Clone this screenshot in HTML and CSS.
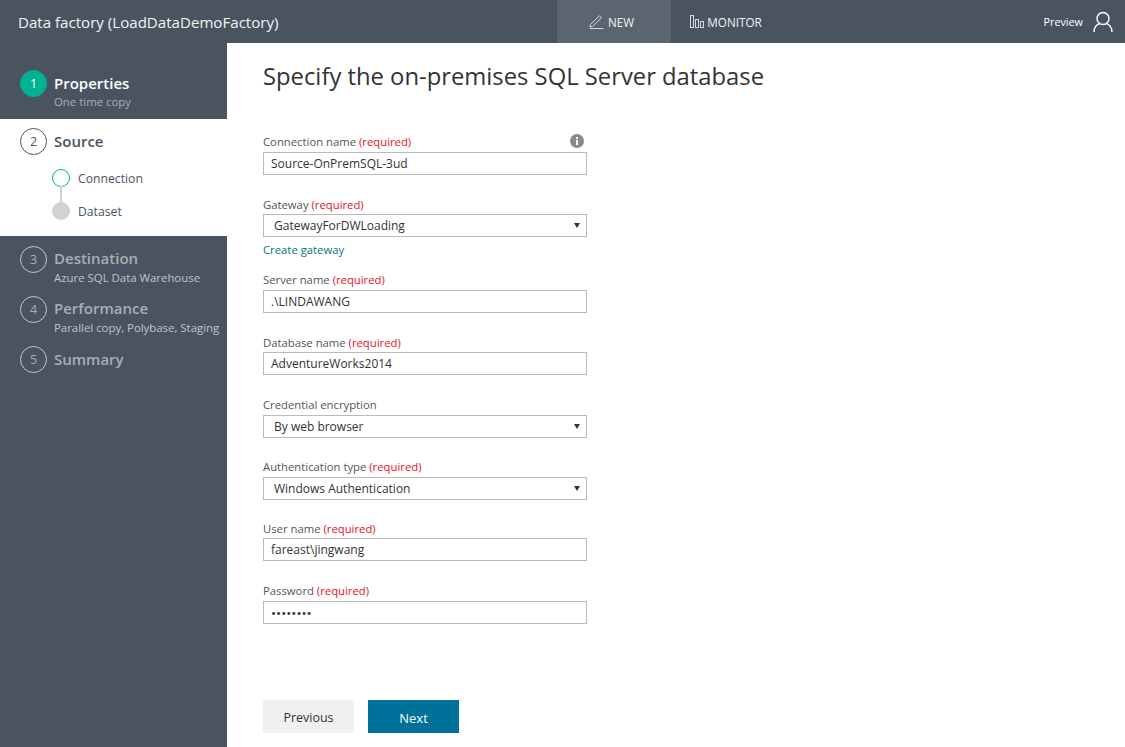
FILE: index.html
```html
<!DOCTYPE html>
<html lang="en">

<head>
    <title>Data factory</title>
    <meta name="viewport" content="initial-scale=1, width=device-width">
    <link rel="stylesheet" href="styles.css">
</head>

<body>
    <header class="topbar">
        <div class="brand">Data factory (LoadDataDemoFactory)</div>
        <nav class="tabs">
            <a class="tab active">
                <svg width="16" height="14" viewBox="0 0 16 14" fill="none" stroke="#d5d9dd" stroke-width="1">
                    <path d="M1.5 9.5 L10.5 0.8 L12.5 2.8 L3.5 11.5 L1 12 Z" />
                    <path d="M1 13.5 H14.5" />
                </svg>
                NEW
            </a>
            <a class="tab monitor">
                <svg width="14" height="13" viewBox="0 0 14 13" fill="none" stroke="#d5d9dd" stroke-width="1">
                    <rect x="0.5" y="0.5" width="3" height="12" />
                    <rect x="5.5" y="4.5" width="3" height="8" />
                    <rect x="10.5" y="6.5" width="3" height="6" />
                </svg>
                MONITOR
            </a>
        </nav>
        <div class="account">
            <span>Preview</span>
            <svg width="20" height="22" viewBox="0 0 20 22" fill="none" stroke="#fff" stroke-width="1.4">
                <circle cx="10" cy="7.5" r="6" />
                <path d="M1 21 C1 16 4 13 7 12.6 M19 21 C19 16 16 13 13 12.6" />
            </svg>
        </div>
    </header>

    <div class="wrap">
        <aside class="sidebar">
            <div class="step done">
                <div class="num">1</div>
                <div>
                    <div class="step-title">Properties</div>
                    <div class="step-sub">One time copy</div>
                </div>
            </div>
            <div class="current">
                <div class="step">
                    <div class="num">2</div>
                    <div class="step-title">Source</div>
                </div>
                <div class="substep">
                    <span class="dot ring"></span>
                    Connection
                </div>
                <div class="substep">
                    <span class="dot fill"></span>
                    Dataset
                </div>
            </div>
            <div class="step later">
                <div class="num">3</div>
                <div>
                    <div class="step-title">Destination</div>
                    <div class="step-sub">Azure SQL Data Warehouse</div>
                </div>
            </div>
            <div class="step later">
                <div class="num">4</div>
                <div>
                    <div class="step-title">Performance</div>
                    <div class="step-sub">Parallel copy, Polybase, Staging</div>
                </div>
            </div>
            <div class="step later">
                <div class="num">5</div>
                <div class="step-title">Summary</div>
            </div>
        </aside>

        <main class="content">
            <h1>Specify the on-premises SQL Server database</h1>

            <form class="form">
                <div class="field">
                    <label for="conn">Connection name <em>(required)</em></label>
                    <svg class="info" width="14" height="14" viewBox="0 0 14 14">
                        <circle cx="7" cy="7" r="7" fill="#8a8a8a" />
                        <rect x="6" y="6" width="2" height="5" fill="#fff" />
                        <rect x="6" y="3" width="2" height="2" fill="#fff" />
                    </svg>
                    <input type="text" id="conn" value="Source-OnPremSQL-3ud">
                </div>
                <div class="field">
                    <label class="low" for="gateway">Gateway <em>(required)</em></label>
                    <div class="select">
                        <select id="gateway">
                            <option>GatewayForDWLoading</option>
                        </select>
                    </div>
                    <a class="link">Create gateway</a>
                </div>
                <div class="field">
                    <label for="server">Server name <em>(required)</em></label>
                    <input type="text" id="server" value=".\LINDAWANG">
                </div>
                <div class="field wide-gap">
                    <label class="low" for="db">Database name <em>(required)</em></label>
                    <input type="text" id="db" value="AdventureWorks2014">
                </div>
                <div class="field">
                    <label for="cred">Credential encryption</label>
                    <div class="select">
                        <select id="cred">
                            <option>By web browser</option>
                        </select>
                    </div>
                </div>
                <div class="field narrow-gap">
                    <label for="auth">Authentication type <em>(required)</em></label>
                    <div class="select">
                        <select id="auth">
                            <option>Windows Authentication</option>
                        </select>
                    </div>
                </div>
                <div class="field wide-gap">
                    <label class="low" for="user">User name <em>(required)</em></label>
                    <input class="clipped" type="text" id="user" value="fareast\jingwang">
                </div>
                <div class="field">
                    <label for="pass">Password <em>(required)</em></label>
                    <input class="dots" type="password" id="pass" value="password">
                </div>
            </form>

            <div class="buttons">
                <button class="btn">Previous</button>
                <button class="btn primary">Next</button>
            </div>
        </main>
    </div>
</body>
</html>
```

FILE: styles.css
```css
* {
    box-sizing: border-box;
    font-family: "Open Sans", "Noto Sans", sans-serif;
}

html,
body {
    margin: 0;
    padding: 0;
    height: 100%;
    background-color: #fff;
    overflow: hidden;
}

.topbar {
    display: flex;
    align-items: center;
    height: 43px;
    background-color: #4a5460;
    color: #fff;
}

.brand {
    width: 557px;
    padding-left: 18px;
    font-size: 15.1px;
    color: #f2f2f2;
}

.tabs {
    display: flex;
    height: 100%;
}

.tab {
    display: flex;
    align-items: center;
    justify-content: center;
    gap: 3px;
    width: 114px;
    font-size: 11.7px;
    color: #f2f2f2;
}

.tab.active {
    background-color: #5b6570;
    padding-right: 5px;
}

.tab.monitor {
    padding-right: 4px;
}

.account {
    display: flex;
    align-items: center;
    gap: 10px;
    margin-left: auto;
    padding-right: 12px;
    font-size: 10.8px;
}

.wrap {
    display: flex;
    height: 704px;
}

.sidebar {
    width: 227px;
    flex-shrink: 0;
    background-color: #4a5460;
}

.step {
    display: flex;
    align-items: flex-start;
    gap: 7px;
    padding-left: 20px;
    height: 50px;
    color: #a9aeb4;
}

.step .num {
    width: 27px;
    height: 27px;
    flex-shrink: 0;
    border: 1px solid #c4c7cb;
    border-radius: 50%;
    text-align: center;
    font-size: 12.5px;
    line-height: 25px;
}

.step-title {
    font-size: 15px;
    font-weight: 600;
    line-height: 24px;
}

.step-sub {
    font-size: 11.4px;
    line-height: 15px;
    color: #c0c3c7;
}

.step.done {
    height: 76px;
    padding-top: 27px;
}

.step.done .num {
    background-color: #00b294;
    border-color: #00b294;
    color: #fff;
}

.step.done .step-title {
    color: #fff;
    line-height: 26px;
}

.step.done .step-sub {
    margin-top: -2px;
    color: #a9aeb4;
}

.current {
    height: 117px;
    margin-bottom: 10px;
    padding-top: 9px;
    background-color: #fff;
}

.current .step {
    height: 41px;
    color: #4a5460;
}

.current .step-title {
    line-height: 26px;
}

.current .num {
    border-color: #4a5460;
}

.later:last-child .step-title {
    line-height: 26px;
}

.substep {
    display: flex;
    align-items: center;
    gap: 8px;
    position: relative;
    height: 18px;
    margin: 0 0 15px 52px;
    font-size: 12.2px;
    color: #4a5460;
}

.dot {
    width: 18px;
    height: 18px;
    border-radius: 50%;
}

.dot.ring {
    border: 1px solid #00b294;
}

.dot.fill {
    background-color: #d2d2d2;
}

/* line between the two sub steps */
.dot.fill::before {
    content: "";
    position: absolute;
    left: 8px;
    top: -16px;
    width: 2px;
    height: 16px;
    background-color: #d2d2d2;
}

.content {
    flex: 1;
    padding: 18px 0 0 36px;
}

h1 {
    margin: 0;
    height: 74px;
    font-size: 23.8px;
    font-weight: 400;
    line-height: 30px;
    color: #333;
}

.form {
    width: 324px;
}

.field {
    position: relative;
    margin-bottom: 22px;
}

.field.wide-gap {
    margin-bottom: 23px;
}

.field.narrow-gap {
    margin-bottom: 21px;
}

label {
    display: block;
    height: 17px;
    font-size: 11.3px;
    line-height: 13px;
    color: #555;
}

label.low {
    line-height: 15px;
}

label em {
    font-style: normal;
    color: #e81123;
}

.info {
    position: absolute;
    right: 3px;
    top: -1px;
}

input,
select {
    display: block;
    width: 100%;
    height: 23px;
    padding: 0 7px;
    border: 1px solid #bababa;
    border-radius: 0;
    background-color: #fff;
    font-size: 12px;
    color: #333;
    outline: none;
}

input.clipped {
    padding: 3px 7px 4px;
}

input.dots {
    font-size: 13.5px;
}

select {
    appearance: none;
    padding-left: 10px;
}

.select {
    position: relative;
}

/* small dropdown arrow */
.select::after {
    content: "";
    position: absolute;
    right: 7px;
    top: 9px;
    border-left: 3px solid transparent;
    border-right: 3px solid transparent;
    border-top: 5px solid #333;
}

.link {
    display: block;
    margin-top: 5px;
    margin-bottom: -6px;
    font-size: 11.3px;
    line-height: 15px;
    color: #007a7a;
}

.buttons {
    display: flex;
    gap: 14px;
    margin-top: 76px;
}

.btn {
    width: 91px;
    height: 33px;
    padding-top: 3px;
    border: none;
    background-color: #f0f0f0;
    font-size: 12.5px;
    color: #333;
}

.btn.primary {
    background-color: #007199;
    color: #fff;
    font-size: 13px;
}
```
